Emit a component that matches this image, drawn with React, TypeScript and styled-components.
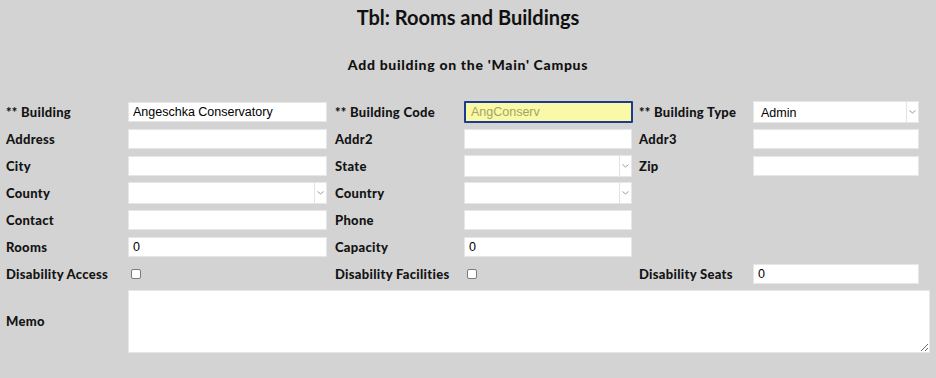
import React from "react";
import styled, { createGlobalStyle } from "styled-components";

const Global = createGlobalStyle`
  html, body { margin: 0; padding: 0; background: #d3d3d3; }
  body { font-family: Lato, "DejaVu Sans", sans-serif; }
`;

const Page = styled.div`
  width: 936px;
  height: 378px;
  background: #d3d3d3;
  padding: 0 6px;
  box-sizing: border-box;
  overflow: hidden;
`;

const Title = styled.h1`
  margin: 0;
  font-family: Lato, sans-serif;
  font-weight: 700;
  font-size: 20px;
  line-height: 34px;
  text-align: center;
  color: #111;
`;

const Subtitle = styled.h2`
  margin: 21px 0 0;
  font-family: Lato, sans-serif;
  font-weight: 900;
  font-size: 14px;
  letter-spacing: 0.7px;
  line-height: 20px;
  text-align: center;
  color: #111;
`;

const Form = styled.div`
  margin-top: 26px;
  display: grid;
  grid-template-columns: 122px 207px 129px 175px 114px 166px;
  grid-auto-rows: 22px;
  row-gap: 5px;
  align-items: center;
`;

const Label = styled.label`
  font-family: Lato, sans-serif;
  font-weight: 900;
  font-size: 13px;
  letter-spacing: 0.3px;
  color: #141414;
  white-space: nowrap;
`;

const TextInput = styled.input<{ $w: number }>`
  box-sizing: border-box;
  width: ${(p) => p.$w}px;
  height: 20px;
  border: 1px solid #e6e6e6;
  background: #fff;
  padding: 0 4px;
  margin: 0;
  font-family: "Liberation Sans", Arial, sans-serif;
  font-size: 12.5px;
  color: #000;
  outline: none;
`;

const CodeInput = styled(TextInput)`
  height: 22px;
  border: 2px solid #1c3b8c;
  background: #fafaa6;
  color: #a3a36a;
  padding: 0 5px;
  border-radius: 1px;
`;

const SelectBox = styled.div<{ $w: number }>`
  box-sizing: border-box;
  width: ${(p) => p.$w}px;
  height: 22px;
  background: #fff;
  border: 1px solid #e6e6e6;
  display: flex;
  align-items: center;
`;

const SelectValue = styled.span`
  flex: 1;
  padding: 2px 0 0 7px;
  font-family: "Liberation Sans", Arial, sans-serif;
  font-size: 12.5px;
  color: #000;
`;

const SelectArrow = styled.span`
  width: 11px;
  height: 100%;
  border-left: 1px solid #e2e2e2;
  display: flex;
  align-items: center;
  justify-content: center;
`;

const Check = styled.input`
  appearance: none;
  display: block;
  margin: 0 0 0 3px;
  width: 10px;
  height: 10px;
  border: 1px solid #7a7a7a;
  border-radius: 2px;
  background: #fff;
  box-sizing: border-box;
`;

const Memo = styled.textarea`
  grid-column: 2 / 7;
  box-sizing: border-box;
  width: 802px;
  height: 63px;
  margin: 0;
  border: 1px solid #e6e6e6;
  background: #fff;
  resize: both;
  outline: none;
  align-self: start;
`;

const MemoLabel = styled(Label)`
  align-self: start;
  margin-top: 23px;
`;

const Chevron = () => (
  <svg width="7" height="4" viewBox="0 0 7 4">
    <path d="M0.5 0.5 L3.5 3 L6.5 0.5" fill="none" stroke="#9a9a9a" strokeWidth="1" />
  </svg>
);

const Select = ({ w, value }: { w: number; value?: string }) => (
  <SelectBox $w={w}>
    <SelectValue>{value}</SelectValue>
    <SelectArrow>
      <Chevron />
    </SelectArrow>
  </SelectBox>
);

export default function App() {
  return (
    <>
      <Global />
      <Page>
        <Title>Tbl: Rooms and Buildings</Title>
        <Subtitle>Add building on the 'Main' Campus</Subtitle>
        <Form>
          <Label>** Building</Label>
          <TextInput $w={199} defaultValue="Angeschka Conservatory" />
          <Label>** Building Code</Label>
          <CodeInput $w={169} defaultValue="AngConserv" />
          <Label>** Building Type</Label>
          <Select w={166} value="Admin" />

          <Label>Address</Label>
          <TextInput $w={199} />
          <Label>Addr2</Label>
          <TextInput $w={168} />
          <Label>Addr3</Label>
          <TextInput $w={166} />

          <Label>City</Label>
          <TextInput $w={199} />
          <Label>State</Label>
          <Select w={168} />
          <Label>Zip</Label>
          <TextInput $w={166} />

          <Label>County</Label>
          <Select w={199} />
          <Label>Country</Label>
          <Select w={168} />
          <span />
          <span />

          <Label>Contact</Label>
          <TextInput $w={199} />
          <Label>Phone</Label>
          <TextInput $w={168} />
          <span />
          <span />

          <Label>Rooms</Label>
          <TextInput $w={199} defaultValue="0" />
          <Label>Capacity</Label>
          <TextInput $w={168} defaultValue="0" />
          <span />
          <span />

          <Label>Disability Access</Label>
          <span><Check type="checkbox" /></span>
          <Label>Disability Facilities</Label>
          <span><Check type="checkbox" /></span>
          <Label>Disability Seats</Label>
          <TextInput $w={166} defaultValue="0" />

          <MemoLabel>Memo</MemoLabel>
          <Memo />
        </Form>
      </Page>
    </>
  );
}
